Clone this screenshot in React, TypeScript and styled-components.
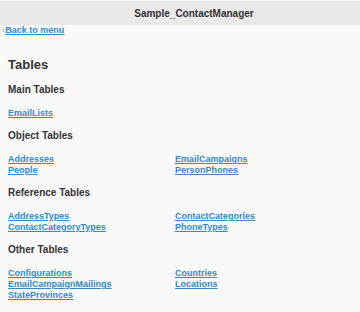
import React, { FC } from "react";
import styled, { createGlobalStyle } from "styled-components";

const GlobalStyle = createGlobalStyle`
    html, body {
        margin: 0;
        padding: 0;
        background: #f9f9f9;
        font-family: "Liberation Sans", Arial, sans-serif;
        color: #333;
    }
`;

const sections: { title: string; links: string[] }[] = [
    { title: "Main Tables", links: ["EmailLists"] },
    {
        title: "Object Tables",
        links: ["Addresses", "EmailCampaigns", "People", "PersonPhones"]
    },
    {
        title: "Reference Tables",
        links: [
            "AddressTypes",
            "ContactCategories",
            "ContactCategoryTypes",
            "PhoneTypes"
        ]
    },
    {
        title: "Other Tables",
        links: [
            "Configurations",
            "Countries",
            "EmailCampaignMailings",
            "Locations",
            "StateProvinces"
        ]
    }
];

const Page = styled.div`
    min-height: 312px;
    background: #f9f9f9;
`;

const HeaderBar = styled.header`
    height: 24px;
    display: flex;
    align-items: center;
    justify-content: center;
    padding-left: 28px;
    background: #e9e9e9;
    border-top: 1px solid #f1f1f1;
    font-size: 10px;
    font-weight: bold;
    color: #333;
`;

const BackRow = styled.div`
    display: flex;
    align-items: center;
    height: 11px;
    padding-left: 2px;
    font-size: 9px;
    line-height: 11px;
`;

const Chevron = styled.span`
    color: #777;
    font-size: 7px;
    margin-right: 1px;
`;

const TextLink = styled.a`
    color: #3388cc;
    font-weight: bold;
    font-size: 9px;
    line-height: 11px;
    text-decoration: underline;
    cursor: pointer;
    white-space: nowrap;
`;

const Content = styled.main`
    padding: 0 8px;
`;

const PageTitle = styled.h1`
    margin: 21px 0 0;
    font-size: 13px;
    line-height: 16px;
    font-weight: bold;
    color: #333;
`;

const Section = styled.section`
    margin-top: 11px;
`;

const SectionTitle = styled.h3`
    margin: 0;
    font-size: 10px;
    line-height: 12px;
    font-weight: bold;
    color: #333;
`;

const LinkGrid = styled.div`
    display: grid;
    grid-template-columns: 167px 1fr;
    margin-top: 12px;
`;

const App: FC = () => (
    <Page>
        <GlobalStyle />
        <HeaderBar>Sample_ContactManager</HeaderBar>
        <BackRow>
            <Chevron>‹</Chevron>
            <TextLink>Back to menu</TextLink>
        </BackRow>
        <Content>
            <PageTitle>Tables</PageTitle>
            {sections.map(section => (
                <Section key={section.title}>
                    <SectionTitle>{section.title}</SectionTitle>
                    <LinkGrid>
                        {section.links.map(link => (
                            <TextLink key={link}>{link}</TextLink>
                        ))}
                    </LinkGrid>
                </Section>
            ))}
        </Content>
    </Page>
);

export default App;
